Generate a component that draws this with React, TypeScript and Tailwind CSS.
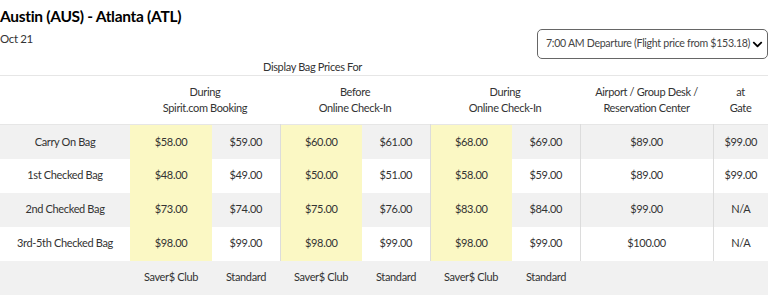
import { FaChevronDown } from 'react-icons/fa'

const rows = [
  { label: 'Carry On Bag', prices: ['$58.00', '$59.00', '$60.00', '$61.00', '$68.00', '$69.00', '$89.00', '$99.00'] },
  { label: '1st Checked Bag', prices: ['$48.00', '$49.00', '$50.00', '$51.00', '$58.00', '$59.00', '$89.00', '$99.00'] },
  { label: '2nd Checked Bag', prices: ['$73.00', '$74.00', '$75.00', '$76.00', '$83.00', '$84.00', '$99.00', 'N/A'] },
  { label: '3rd-5th Checked Bag', prices: ['$98.00', '$99.00', '$98.00', '$99.00', '$98.00', '$99.00', '$100.00', 'N/A'] },
]

// cells that start a new column group get a left border
const groupStart = [false, false, true, false, true, false, true, true]

export default function App() {
  return (
    <div className="w-[770px] h-[303px] overflow-hidden bg-white text-[#333] font-['Lato','Liberation_Sans',sans-serif] tracking-[-0.35px]">
      {/* Header */}
      <div className="flex justify-between">
        <div>
          <h1 className="mt-[5px] text-[15.5px] leading-[22px] font-bold text-black tracking-[-0.3px]">Austin (AUS) - Atlanta (ATL)</h1>
          <p className="mt-[5px] text-[11.5px] leading-[14px]">Oct 21</p>
        </div>
        <button className="mt-[29px] mr-[2px] w-[231px] h-[30px] flex items-center justify-between pl-[8px] pr-[4px] border border-[#666] rounded-[5px] text-[10.6px] text-[#444] whitespace-nowrap tracking-[-0.3px]">
          <span>7:00 AM Departure (Flight price from $153.18)</span>
          <FaChevronDown size={11} className="text-black" />
        </button>
      </div>

      <div className="h-[16px] pl-[263px] text-[11px] leading-[16px]">Display Bag Prices For</div>

      {/* Price table */}
      <table className="w-[768px] table-fixed border-collapse text-[11px] text-center">
        <colgroup>
          <col className="w-[130px]" />
          <col className="w-[82px]" />
          <col className="w-[68px]" />
          <col className="w-[82px]" />
          <col className="w-[68px]" />
          <col className="w-[82px]" />
          <col className="w-[68px]" />
          <col className="w-[133px]" />
          <col className="w-[55px]" />
        </colgroup>
        <thead>
          <tr className="h-[49px] border-y border-[#e6e6e6] leading-[16px]">
            <th />
            <th colSpan={2} className="font-normal">During<br />Spirit.com Booking</th>
            <th colSpan={2} className="font-normal">Before<br />Online Check-In</th>
            <th colSpan={2} className="font-normal">During<br />Online Check-In</th>
            <th className="font-normal">Airport / Group Desk /<br />Reservation Center</th>
            <th className="font-normal">at<br />Gate</th>
          </tr>
        </thead>
        <tbody>
          {rows.map((row, i) => (
            <tr key={row.label} className={`h-[34px] ${i % 2 === 0 ? 'bg-[#f1f1f1]' : 'bg-white'}`}>
              <td>{row.label}</td>
              {row.prices.map((p, j) => (
                <td
                  key={j}
                  className={`${j < 6 && j % 2 === 0 ? 'bg-[#fbf8c4]' : ''} ${groupStart[j] ? 'border-l border-[#dcdcdc]' : ''}`}
                >
                  {p}
                </td>
              ))}
            </tr>
          ))}
          <tr className="h-[34px] bg-[#f1f1f1]">
            <td />
            <td>Saver$ Club</td>
            <td>Standard</td>
            <td>Saver$ Club</td>
            <td>Standard</td>
            <td>Saver$ Club</td>
            <td>Standard</td>
            <td />
            <td />
          </tr>
        </tbody>
      </table>
    </div>
  )
}
